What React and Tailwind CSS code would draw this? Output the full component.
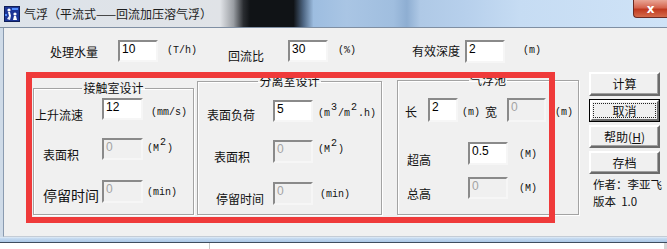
import React from 'react';

const cjk = "font-['Noto_Sans_CJK_SC',sans-serif]";
const mono = "font-['Liberation_Mono',monospace]";

function Label({ children, className = '' }) {
  return (
    <span className={`${cjk} shrink-0 whitespace-nowrap text-[12px] leading-[16px] text-[#111] ${className}`}>
      {children}
    </span>
  );
}

function Unit({ children, className = '' }) {
  return (
    <span className={`${mono} shrink-0 whitespace-nowrap text-[10px] leading-[12px] text-[#111] ${className}`}>
      {children}
    </span>
  );
}

function Sup({ children }) {
  return <span className="inline-block -translate-y-[6px] px-[1px]">{children}</span>;
}

function TextBox({ value, disabled, className = '' }) {
  return (
    <div
      className={`shrink-0 border-2 border-t-[#8a8a8a] border-l-[#8a8a8a] border-r-[#f6f6f6] border-b-[#f6f6f6] pl-[2px] pt-[1px] font-['Liberation_Sans',sans-serif] text-[12px] leading-[13px] ${
        disabled ? 'bg-[#f0f0f0] text-[#a3a3a3]' : 'bg-white text-black'
      } ${className}`}
    >
      {value}
    </div>
  );
}

function Button({ children, isDefault, className = '' }) {
  if (isDefault) {
    return (
      <div className={`border border-black ${className}`}>
        <div className="flex h-full items-center justify-center border-2 border-t-white border-l-white border-r-[#6b6b6b] border-b-[#6b6b6b] bg-[#f0f0f0]">
          <div className={`${cjk} flex h-[15px] w-[63px] items-center justify-center border border-dotted border-[#222] text-[12px] leading-[14px] text-[#111]`}>
            {children}
          </div>
        </div>
      </div>
    );
  }
  return (
    <div
      className={`${cjk} flex items-center justify-center border-2 border-t-white border-l-white border-r-[#6b6b6b] border-b-[#6b6b6b] bg-[#f0f0f0] text-[12px] leading-[14px] text-[#111] shadow-[inset_-1px_-1px_0_#a0a0a0] ${className}`}
    >
      {children}
    </div>
  );
}

function GroupBox({ title, className = '', children }) {
  return (
    <fieldset
      className={`shrink-0 border border-[#a3a3a3] shadow-[1px_1px_0_#fff,inset_1px_1px_0_#fff] ${className}`}
    >
      <legend className={`${cjk} mx-auto px-[1px] text-[12px] leading-[16px] text-[#111]`}>{title}</legend>
      {children}
    </fieldset>
  );
}

function AppIcon() {
  return (
    <svg width="16" height="16" viewBox="0 0 16 16" className="shrink-0">
      <rect x="0" y="0" width="16" height="16" fill="#0e1d58" />
      <rect x="1" y="1" width="14" height="14" fill="#1c3596" />
      <circle cx="5" cy="4" r="1.6" fill="#fff" />
      <path d="M4 6 L6 6 L7 10 L5 10 Z" fill="#fff" />
      <path d="M3 13 L5 10 L7 10 L6 14 Z" fill="#e8eefc" />
      <circle cx="11" cy="8" r="1.6" fill="#fff" />
      <path d="M10 10 L12 10 L13 14 L9 14 Z" fill="#fff" />
      <rect x="8" y="2" width="6" height="2" fill="#4f8cff" />
      <rect x="1" y="8" width="2" height="2" fill="#4f8cff" />
    </svg>
  );
}

export default function App() {
  return (
    <div className="relative h-[249px] w-[667px] overflow-hidden bg-white">
      {/* title bar */}
      <div className="flex h-[28px] items-start border-b border-[#7f8fa3] bg-[linear-gradient(90deg,#dde3ea_0%,#e0e3e7_33%,#9a9ea3_35%,#2a2d31_36.5%,#101316_37.5%,#101316_44%,#4f6784_45.5%,#9dbde0_47%,#a9c5e4_52%,#a0bedf_59%,#8eaed2_61%,#afc9e6_63%,#b7d0ec_70%,#c6dcf3_78%,#cfe3f7_100%)]">
        <div className="ml-[4px] mt-[6px]">
          <AppIcon />
        </div>
        <span className={`${cjk} ml-[4px] mt-[6px] text-[12px] leading-[16px] text-[#1d1d1d]`}>
          气浮（平流式——回流加压溶气浮）
        </span>
        <div className="ml-auto flex h-[18px] w-[34px] items-center justify-center rounded-bl-[4px] border border-t-0 border-r-0 border-[#6b2a22] bg-[linear-gradient(180deg,#e9a595_0%,#d5654f_45%,#c0391f_55%,#d46b4b_100%)]">
          <span className="font-['DejaVu_Sans',sans-serif] text-[12px] font-bold leading-[12px] text-white">x</span>
        </div>
      </div>

      {/* window body */}
      <div className="flex h-[209px]">
        <div className="w-[3px] bg-[#cfdbe8]" />
        <div className="flex-1 border-l border-b border-l-[#8a9bb0] border-b-[#c4ccd6] bg-[#f0f0f0]">
          {/* top row */}
          <div className="mt-[12px] flex h-[23px] items-start">
            <Label className="ml-[46px] mt-[4px]">处理水量</Label>
            <TextBox value="10" className="ml-[20px] h-[22px] w-[40px]" />
            <Unit className="ml-[9px] mt-[5px]">(T/h)</Unit>
            <Label className="ml-[31px] mt-[8px]">回流比</Label>
            <TextBox value="30" className="ml-[24px] h-[22px] w-[40px]" />
            <Unit className="ml-[10px] mt-[5px]">(%)</Unit>
            <Label className="ml-[56px] mt-[3px]">有效深度</Label>
            <TextBox value="2" className="ml-[5px] h-[23px] w-[40px]" />
            <Unit className="ml-[18px] mt-[5px]">(m)</Unit>
          </div>

          {/* groups */}
          <div className="mt-[9px] flex items-start">
            <GroupBox title="接触室设计" className="ml-[29px] mt-[8px] h-[135px] w-[161px]">
              <div className="pt-[2px]">
                <div className="flex h-[40px] items-start">
                  <Label className="w-[68px] pl-[1px] mt-[9px]">上升流速</Label>
                  <TextBox value="12" className="h-[22px] w-[41px]" />
                  <Unit className="ml-[8px] mt-[9px]">(mm/s)</Unit>
                </div>
                <div className="flex h-[42px] items-start">
                  <Label className="w-[68px] pl-[9px] mt-[9px]">表面积</Label>
                  <TextBox value="0" disabled className="h-[22px] w-[41px]" />
                  <Unit className="ml-[4px] mt-[5px]">(M<Sup>2</Sup>)</Unit>
                </div>
                <div className="flex items-start">
                  <Label className="w-[68px] pl-[9px] mt-[6px] text-[14px] leading-[18px]">停留时间</Label>
                  <TextBox value="0" disabled className="h-[23px] w-[41px]" />
                  <Unit className="ml-[4px] mt-[7px]">(min)</Unit>
                </div>
              </div>
            </GroupBox>

            <GroupBox title="分离室设计" className="ml-[3px] mt-[1px] h-[142px] w-[185px]">
              <div className="pt-[11px]">
                <div className="flex h-[40px] items-start">
                  <Label className="w-[75px] pl-[9px] mt-[7px]">表面负荷</Label>
                  <TextBox value="5" className="h-[22px] w-[40px]" />
                  <Unit className="ml-[5px] mt-[8px]">(m<Sup>3</Sup>/m<Sup>2</Sup>.h)</Unit>
                </div>
                <div className="flex h-[42px] items-start">
                  <Label className="w-[75px] pl-[16px] mt-[9px]">表面积</Label>
                  <TextBox value="0" disabled className="h-[23px] w-[40px]" />
                  <Unit className="ml-[5px] mt-[4px]">(M<Sup>2</Sup>)</Unit>
                </div>
                <div className="flex items-start">
                  <Label className="w-[75px] pl-[18px] mt-[9px]">停留时间</Label>
                  <TextBox value="0" disabled className="h-[23px] w-[40px]" />
                  <Unit className="ml-[7px] mt-[7px]">(min)</Unit>
                </div>
              </div>
            </GroupBox>

            <GroupBox title="气浮池" className="ml-[15px] h-[143px] w-[182px]">
              <div className="pt-[10px]">
                <div className="flex h-[44px] items-start">
                  <Label className="ml-[7px] mt-[6px]">长</Label>
                  <TextBox value="2" className="ml-[11px] h-[24px] w-[30px]" />
                  <Unit className="ml-[4px] mt-[9px]">(m)</Unit>
                  <Label className="ml-[5px] mt-[6px]">宽</Label>
                  <TextBox value="0" disabled className="ml-[10px] h-[24px] w-[39px]" />
                  <Unit className="ml-[9px] mt-[9px]">(m)</Unit>
                </div>
                <div className="flex h-[35px] items-start">
                  <Label className="w-[70px] pl-[9px] mt-[10px]">超高</Label>
                  <TextBox value="0.5" className="h-[23px] w-[40px]" />
                  <Unit className="ml-[11px] mt-[7px]">(M)</Unit>
                </div>
                <div className="flex items-start">
                  <Label className="w-[70px] pl-[9px] mt-[9px]">总高</Label>
                  <TextBox value="0" disabled className="h-[22px] w-[40px]" />
                  <Unit className="ml-[11px] mt-[6px]">(M)</Unit>
                </div>
              </div>
            </GroupBox>

            <div className="ml-[10px] flex w-[71px] shrink-0 flex-col gap-[3px]">
              <Button className="h-[24px]">计算</Button>
              <Button isDefault className="h-[23px]">取消</Button>
              <Button className="h-[23px]">
                帮助(<span className="underline">H</span>)
              </Button>
              <Button className="h-[23px]">存档</Button>
              <div className={`${cjk} ml-[4px] -mt-[1px] text-[11.5px] leading-[17px] text-[#111] whitespace-pre`}>
                <div>作者：李亚飞</div>
                <div>版本  1.0</div>
              </div>
            </div>
          </div>
        </div>
      </div>

      {/* bottom frame */}
      <div className="h-[5px] border-t border-[#d8e6f4] bg-[linear-gradient(180deg,#c9ddf2,#aac6e5)]" />
      <div className="h-[1px] bg-[#3e4c5e]" />
      <div className="flex h-[6px]">
        <div className="w-[209px]" />
        <div className="w-[1px] bg-[#c9c9c9]" />
        <div className="flex-1" />
        <div className="w-[3px] bg-[#d6d6d6]" />
      </div>

      {/* red annotation frame */}
      <div className="pointer-events-none absolute left-[26px] top-[72px] h-[151px] w-[529px] border-[6px] border-[#ef3a3a]" />
    </div>
  );
}
